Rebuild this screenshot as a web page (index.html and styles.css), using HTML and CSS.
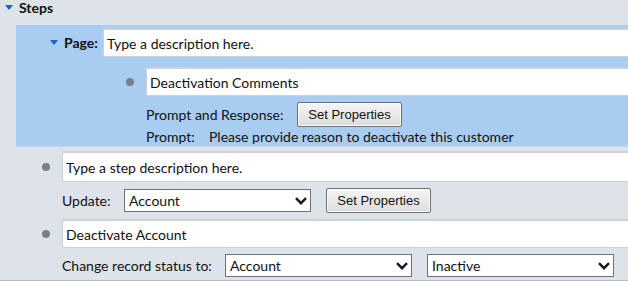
FILE: index.html
```html
<!DOCTYPE html>
<html lang="en">
<head>
  <meta charset="UTF-8" />
  <title>Process Steps</title>
  <link rel="stylesheet" href="styles.css">
</head>
<body>
  <div class="designer">
    <div class="section-head">
      <span class="tri"></span>
      <span class="head-label">Steps</span>
    </div>

    <div class="page-block">
      <div class="page-row">
        <span class="tri"></span>
        <span class="page-label">Page:</span>
        <div class="textbox">Type a description here.</div>
      </div>
      <div class="step nested">
        <div class="step-row">
          <span class="dot"></span>
          <div class="textbox">Deactivation Comments</div>
        </div>
        <div class="field-row row-btn">
          <span class="lbl w-resp">Prompt and Response:</span>
          <button class="btn">Set Properties</button>
        </div>
        <div class="field-row row-prompt">
          <span class="lbl w-prompt">Prompt:</span>
          <span>Please provide reason to deactivate this customer</span>
        </div>
      </div>
    </div>

    <div class="step">
      <div class="step-row first">
        <span class="dot"></span>
        <div class="textbox tall">Type a step description here.</div>
      </div>
      <div class="field-row row-btn">
        <span class="lbl w-update">Update:</span>
        <div class="select w-sel1">
          <span>Account</span>
          <svg class="chev" viewBox="0 0 12 8" width="12" height="8"><path d="M1 1.2 L6 6.2 L11 1.2" /></svg>
        </div>
        <button class="btn btn-gap">Set Properties</button>
      </div>
      <div class="step-row">
        <span class="dot"></span>
        <div class="textbox">Deactivate Account</div>
      </div>
      <div class="field-row row-status">
        <span class="lbl w-status">Change record status to:</span>
        <div class="select w-sel2">
          <span>Account</span>
          <svg class="chev" viewBox="0 0 12 8" width="12" height="8"><path d="M1 1.2 L6 6.2 L11 1.2" /></svg>
        </div>
        <div class="select w-sel2 sel-gap">
          <span>Inactive</span>
          <svg class="chev" viewBox="0 0 12 8" width="12" height="8"><path d="M1 1.2 L6 6.2 L11 1.2" /></svg>
        </div>
      </div>
    </div>
  </div>
</body>
</html>
```

FILE: styles.css
```css
body { margin: 0; background: #dee3e9; color: #111; font-family: Lato, "Open Sans", sans-serif; font-size: 14px; overflow: hidden; }
.designer { width: 100%; height: 281px; overflow: hidden; border-bottom: 1px solid #b9bec5; box-sizing: border-box; }

.tri { width: 0; height: 0; border-left: 4px solid transparent; border-right: 4px solid transparent; border-top: 5px solid #1f5fd1; }

.section-head { display: flex; align-items: center; height: 25px; padding-left: 5px; box-sizing: border-box; padding-bottom: 10px; }
.head-label { font-weight: bold; margin-left: 6px; font-size: 14px; }

.page-block { margin-left: 16px; background: #a9cdf0; padding-top: 3px; height: 122px; box-sizing: border-box; border-bottom: 1px solid #c4d3e2; }
.page-row { display: flex; align-items: center; padding-left: 34px; }
.page-label { font-weight: bold; margin-left: 6px; width: 39px; }

.textbox { flex: 1; min-width: 0; height: 29px; background: #fff; border: 1px solid #cdd0d4; border-top-width: 2px; border-right: none; box-sizing: border-box; padding-left: 3px; display: flex; align-items: center; white-space: nowrap; }
.textbox.tall { height: 31px; }

.step { padding-left: 41px; }
.step.nested { padding-left: 109px; }
.step-row { display: flex; align-items: center; margin-top: 6px; }
.step-row.first { margin-top: 4px; }
.nested .step-row { margin-top: 10px; }
.dot { width: 8px; height: 8px; border-radius: 50%; background: #7c7f84; margin-right: 12px; margin-left: 1px; flex: none; }

.field-row { display: flex; align-items: center; padding-left: 21px; white-space: nowrap; }
.row-btn { margin-top: 6px; height: 25px; }
.row-prompt { height: 19px; }
.row-status { margin-top: 6px; height: 23px; }

.lbl { display: inline-block; flex: none; }
.w-resp { width: 151px; }
.w-prompt { width: 63px; }
.w-update { width: 62px; }
.w-status { width: 163px; }

.btn { font-family: "Liberation Sans", Arial, sans-serif; font-size: 13px; color: #111; height: 25px; width: 105px; padding: 0; background: linear-gradient(#f6f6f6, #dcdcdc); border: 1px solid #707070; border-radius: 2px; box-shadow: inset 0 0 0 1px #fbfbfb; flex: none; }
.btn-gap { margin-left: 15px; }

.select { display: flex; align-items: center; justify-content: space-between; height: 23px; background: #fff; border: 1px solid #6f7275; box-sizing: border-box; padding: 0 3px 0 4px; flex: none; }
.w-sel1 { width: 187px; }
.w-sel2 { width: 187px; }
.sel-gap { margin-left: 15px; }
.chev { fill: none; stroke: #15152a; stroke-width: 2.4; }
```
